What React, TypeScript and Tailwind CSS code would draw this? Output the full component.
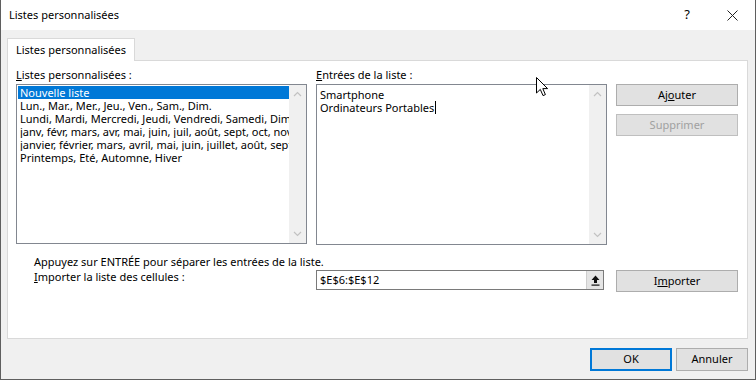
import React from "react";

const font = { fontFamily: '"Noto Sans", "Open Sans", sans-serif' };

const listItems = [
  "Nouvelle liste",
  "Lun., Mar., Mer., Jeu., Ven., Sam., Dim.",
  "Lundi, Mardi, Mercredi, Jeudi, Vendredi, Samedi, Dimanche",
  "janv, févr, mars, avr, mai, juin, juil, août, sept, oct, nov, déc",
  "janvier, février, mars, avril, mai, juin, juillet, août, septembre, octobre",
  "Printemps, Eté, Automne, Hiver",
];

const Chevron = ({ up }: { up?: boolean }) => (
  <svg width="9" height="6" viewBox="0 0 9 6">
    <path
      d={up ? "M1 5 L4.5 1.5 L8 5" : "M1 1 L4.5 4.5 L8 1"}
      fill="none"
      stroke="#c2c2c2"
      strokeWidth="1.2"
    />
  </svg>
);

const ScrollBar = () => (
  <div className="w-[17px] h-full shrink-0 bg-[#f0f0f0] flex flex-col items-center justify-between py-[6px]">
    <Chevron up />
    <Chevron />
  </div>
);

const Button = ({
  children,
  disabled,
  className = "",
}: {
  children: React.ReactNode;
  disabled?: boolean;
  className?: string;
}) => (
  <div
    className={`flex items-center justify-center bg-[#e1e1e1] border ${
      disabled ? "border-[#bfbfbf] text-[#a0a0a0]" : "border-[#adadad] text-black"
    } ${className}`}
  >
    {children}
  </div>
);

export default function App() {
  return (
    <div
      className="relative w-[756px] h-[380px] bg-[#f0f0f0] border-l border-r border-b border-[#5f5f5f] flex flex-col text-[11px] text-black overflow-hidden whitespace-nowrap"
      style={font}
    >
      {/* title bar */}
      <div className="h-[30px] bg-white flex items-center pl-[8px]">
        <div className="flex-1 text-[11px]">Listes personnalisées</div>
        <div className="w-[10px] shrink-0 text-center text-[13px]">?</div>
        <svg className="shrink-0 ml-[35px] mr-[17px]" width="11" height="11" viewBox="0 0 11 11">
          <path d="M0.5 0.5 L10.5 10.5 M10.5 0.5 L0.5 10.5" stroke="#222" strokeWidth="1" />
        </svg>
      </div>

      {/* tab */}
      <div className="mt-[8px] ml-[6px] relative z-10 w-[128px] h-[23px] bg-white border border-b-0 border-[#d9d9d9] pl-[8px] leading-[22px]">
        Listes personnalisées
      </div>

      {/* panel */}
      <div className="-mt-px ml-[6px] w-[741px] h-[279px] bg-white border border-[#d9d9d9] pl-[8px]">
        <div className="flex gap-[9px]">
          <div className="w-[291px]">
            <div className="h-[23px] pt-[6px] leading-[16px]">
              <span className="underline">L</span>istes personnalisées :
            </div>
            <div className="h-[160px] border border-[#828790] flex bg-white">
              <div className="flex-1 min-w-0 pt-px pl-px overflow-hidden leading-[13px]">
                {listItems.map((item, i) => (
                  <div
                    key={i}
                    className={`h-[13px] pl-[2px] overflow-hidden ${
                      i === 0 ? "bg-[#0078d7] text-white" : ""
                    }`}
                  >
                    {item}
                  </div>
                ))}
              </div>
              <ScrollBar />
            </div>
          </div>

          <div className="w-[291px]">
            <div className="h-[23px] pt-[6px] leading-[16px]">
              <span className="underline">E</span>ntrées de la liste :
            </div>
            <div className="h-[161px] border border-[#828790] flex bg-white">
              <div className="flex-1 pt-[3px] pl-[3px] leading-[13px]">
                <div>Smartphone</div>
                <div className="flex items-center">
                  Ordinateurs Portables
                  <span className="inline-block w-px h-[13px] bg-black ml-px" />
                </div>
              </div>
              <ScrollBar />
            </div>
          </div>

          <div className="w-[122px] pt-[23px] flex flex-col gap-[8px]">
            <Button className="h-[22px]">
              Aj<span className="underline">o</span>uter
            </Button>
            <Button className="h-[22px]" disabled>
              Supprimer
            </Button>
          </div>
        </div>

        <div className="mt-[9px] pl-[18px] leading-[16px]">
          Appuyez sur ENTRÉE pour séparer les entrées de la liste.
        </div>

        <div className="flex items-start">
          <div className="w-[300px] pl-[18px] leading-[16px] -mt-px">
            <span className="underline">I</span>mporter la liste des cellules :
          </div>
          <div className="w-[288px] h-[20px] border border-[#7a7a7a] flex items-center bg-white">
            <span className="flex-1 pl-[3px] leading-[16px]">$E$6:$E$12</span>
            <div className="w-[17px] h-[18px] bg-[#e5e5e5] border-l border-[#cfcfcf] flex items-center justify-center">
              <svg width="9" height="11" viewBox="0 0 9 11">
                <path d="M4.5 0.5 L8.5 5 L6 5 L6 8 L3 8 L3 5 L0.5 5 Z" fill="#111" />
                <rect x="0.5" y="9.5" width="8" height="1.2" fill="#111" />
              </svg>
            </div>
          </div>
          <Button className="ml-[12px] w-[122px] h-[22px]">
            I<span className="underline">m</span>porter
          </Button>
        </div>
      </div>

      {/* footer */}
      <div className="flex mt-[9px] ml-[589px] gap-[4px]">
        <div className="w-[82px] h-[23px] bg-[#e1e1e1] border-2 border-[#0078d7] flex items-center justify-center">
          OK
        </div>
        <Button className="w-[72px] h-[23px]">Annuler</Button>
      </div>

      {/* mouse pointer */}
      <svg
        className="absolute left-[535px] top-[77px]"
        width="13"
        height="20"
        viewBox="0 0 13 20"
      >
        <path
          d="M0.5 0.5 L0.5 16 L4.3 12.4 L7 18.6 L9.4 17.6 L6.8 11.6 L11.6 11.6 Z"
          fill="white"
          stroke="black"
          strokeWidth="1"
        />
      </svg>
    </div>
  );
}
